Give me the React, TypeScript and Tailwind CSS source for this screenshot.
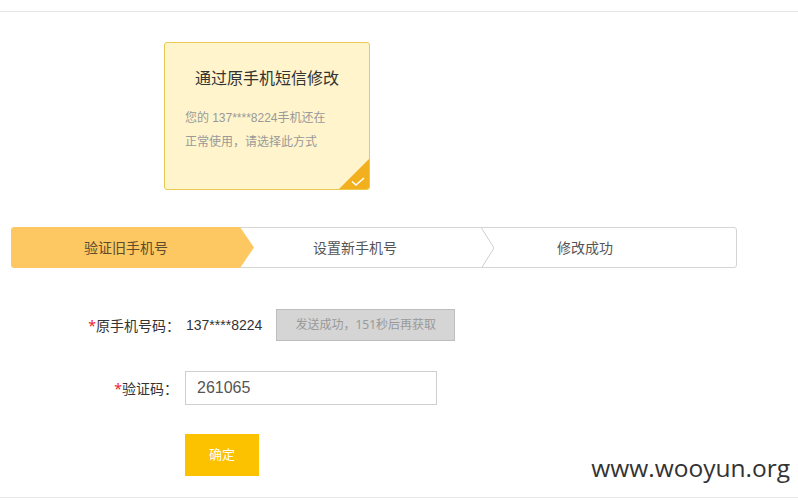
import { useState } from "react";

const STEPS = ["验证旧手机号", "设置新手机号", "修改成功"];

function CheckCorner() {
  return (
    <svg className="absolute right-0 bottom-0" width="30" height="30" viewBox="0 0 30 30">
      <polygon points="30,0 30,30 0,30" fill="#f2b01e" />
      <path d="M13 22.5 L17 26 L25 19" fill="none" stroke="#fff" strokeWidth="1.6" />
    </svg>
  );
}

function Chevron() {
  return (
    <svg className="absolute left-[11px] top-0" width="14" height="40" viewBox="0 0 14 40">
      <path d="M0.5 0 L13 20 L0.5 40" fill="none" stroke="#cfcfcf" strokeWidth="1" />
    </svg>
  );
}

export default function App() {
  const [code, setCode] = useState("261065");

  return (
    <div className="relative w-[798px] h-[500px] bg-white overflow-hidden"
      style={{ fontFamily: '"Noto Sans", "Noto Sans CJK SC", sans-serif' }}>
      <div className="h-[12px] border-b border-[#e6e6e6]" />

      {/* 方式卡片 */}
      <div className="relative ml-[164px] mt-[30px] w-[206px] h-[148px] rounded-[3px] border border-[#ebc94e] bg-[#fff4cc] overflow-hidden">
        <p className="mt-[23px] text-center text-[16px] leading-[24px] text-[#333]">通过原手机短信修改</p>
        <div className="mt-[16px] px-[20px] text-[12px] leading-[24px] text-[#999]">
          <p>您的 <span style={{ fontFamily: '"Liberation Sans", Arial, sans-serif' }}>137****8224</span>手机还在</p>
          <p>正常使用，请选择此方式</p>
        </div>
        <CheckCorner />
      </div>

      {/* 步骤条 */}
      <div className="ml-[11px] mt-[37px] flex w-[726px] h-[41px] rounded-[3px] border border-[#d4d4d4] text-[14px]">
        <div className="-ml-px -my-px w-[243px] h-[41px] pr-[13px] flex items-center justify-center rounded-l-[4px] bg-[#fdc862] text-[#5c4b2c] [clip-path:polygon(0_0,229px_0,100%_50%,229px_100%,0_100%)]">
          {STEPS[0]}
        </div>
        <div className="-ml-[14px] w-[230px] flex items-center justify-center text-[#555]">
          {STEPS[1]}
        </div>
        <div className="relative w-[230px] flex items-center justify-center text-[#555]">
          <Chevron />
          {STEPS[2]}
        </div>
      </div>

      {/* 表单 */}
      <div className="mt-[41px] flex items-center h-[32px]">
        <label className="w-[180px] text-right text-[14px] text-[#333]">
          <span className="text-[#e23]">*</span>原手机号码：
        </label>
        <span className="ml-[6px] text-[14px] text-[#333]" style={{ fontFamily: '"Liberation Sans", Arial, sans-serif' }}>137****8224</span>
        <button className="ml-[14px] w-[179px] h-[32px] border border-[#bdbdbd] bg-[#d5d5d5] text-[12px] text-[#999]">
          发送成功，151秒后再获取
        </button>
      </div>

      <div className="mt-[30px] flex items-center h-[34px]">
        <label className="w-[178px] text-right text-[14px] text-[#333]">
          <span className="text-[#e23]">*</span>验证码：
        </label>
        <input value={code} onChange={e => setCode(e.target.value)}
          className="ml-[7px] w-[252px] h-[34px] border border-[#cfcfcf] px-[11px] text-[16px] text-[#555] outline-none"
          style={{ fontFamily: '"Liberation Sans", Arial, sans-serif' }} />
      </div>

      <button className="ml-[185px] mt-[29px] w-[74px] h-[42px] bg-[#fcc200] text-[13px] text-white">
        确定
      </button>

      <p className="absolute right-[8px] bottom-[13px] text-[24.5px] text-[#333]" style={{ fontFamily: '"Open Sans", sans-serif' }}>
        www.wooyun.org
      </p>
      <div className="absolute left-0 bottom-[2px] w-full border-b border-[#e6e6e6]" />
    </div>
  );
}
